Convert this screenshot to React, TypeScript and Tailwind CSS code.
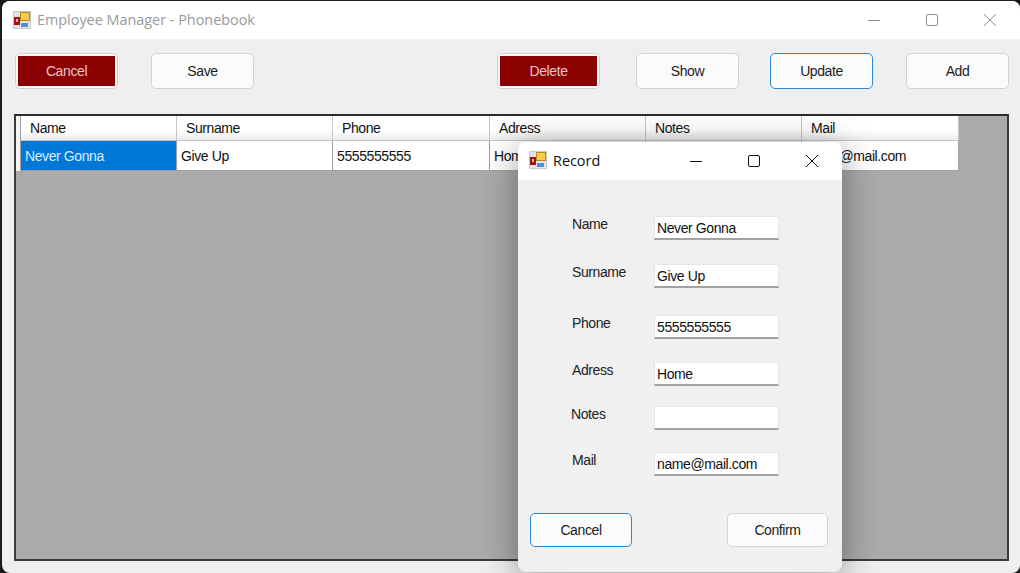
import React from "react";

const sans = "font-['Liberation_Sans',Arial,sans-serif]";
const ui = "font-['Open_Sans','Noto_Sans',sans-serif]";
const txt = "text-[14px] tracking-[-0.4px]";

function AppIcon() {
  return (
    <svg width="18" height="18" viewBox="0 0 18 18" className="shrink-0">
      <rect x="0" y="0" width="18" height="18" fill="#c9c9c9" />
      <rect x="1" y="1" width="16" height="16" fill="#e4e4e4" />
      <rect x="7" y="1" width="10" height="9" fill="#b48a1e" />
      <rect x="8" y="2" width="8" height="7" fill="#f6cc4a" />
      <rect x="1" y="6" width="6" height="8" fill="#a31515" />
      <rect x="3" y="8" width="2" height="3" fill="#f1b5b5" />
      <rect x="8" y="12" width="7" height="4" fill="#4f8ddb" />
    </svg>
  );
}

function Caption({ tone, gap }: { tone: string; gap: string }) {
  return (
    <div className="flex items-center">
      <svg width="14" height="14" viewBox="0 0 14 14">
        <path d="M1 7.5H13" stroke={tone} strokeWidth="1" />
      </svg>
      <svg width="14" height="14" viewBox="0 0 14 14" className={gap}>
        <rect x="1.5" y="1.5" width="11" height="11" rx="1.5" fill="none" stroke={tone} strokeWidth="1" />
      </svg>
      <svg width="14" height="14" viewBox="0 0 14 14" className={gap}>
        <path d="M1 1L13 13M13 1L1 13" stroke={tone} strokeWidth="1" />
      </svg>
    </div>
  );
}

function Btn({ label, kind = "plain", className = "" }: { label: string; kind?: "plain" | "red" | "focus"; className?: string }) {
  const base = `h-[36px] rounded-[5px] border ${txt} flex items-center justify-center ${sans} ${className}`;
  if (kind === "red") {
    return (
      <div className={`${base} w-[103px] border-[#d0d0d0] bg-[#fbfbfb] p-[2px] text-[#e8c8c8]`}>
        <div className="flex h-full w-full items-center justify-center bg-[#8b0000]">{label}</div>
      </div>
    );
  }
  const tone = kind === "focus" ? "border-[#2b87d8] border-[1.5px]" : "border-[#d2d2d2]";
  return <div className={`${base} w-[103px] ${tone} bg-[#fbfbfb] text-[#1c1c1c]`}>{label}</div>;
}

const columns = ["Name", "Surname", "Phone", "Adress", "Notes", "Mail"];
const cells = ["Never Gonna", "Give Up", "5555555555", "Home", "", "name@mail.com"];
const widths = ["w-[156px]", "w-[156px]", "w-[157px]", "w-[156px]", "w-[156px]", "w-[157px]"];

function Field({ label, value, mt, labelClass = "" }: { label: string; value: string; mt: string; labelClass?: string }) {
  return (
    <div className={`flex items-start ${mt}`}>
      <span className={`w-[82px] ${txt} leading-[16px] text-[#222] ${labelClass}`}>{label}</span>
      <input
        readOnly
        value={value}
        className={`h-[24px] w-[125px] border border-[#e6e6e6] border-b-2 border-b-[#a3a3a3] bg-white px-[2px] ${txt} text-[#111] outline-none ${sans}`}
      />
    </div>
  );
}

export default function App() {
  return (
    <div className={`relative h-[573px] w-[1020px] overflow-hidden bg-[#1c1c1c] pl-[2px] pt-[1px] ${sans}`}>
      <div className="flex h-[572px] w-[1018px] flex-col overflow-hidden rounded-[8px] bg-[#efefef]">
        <div className="flex h-[38px] shrink-0 items-center justify-between bg-white pl-[11px] pr-[23px]">
          <div className="flex items-center gap-[6px]">
            <AppIcon />
            <span className={`text-[14.4px] text-[#9a9a9a] ${ui}`}>Employee Manager - Phonebook</span>
          </div>
          <Caption tone="#8f8f8f" gap="ml-[44px]" />
        </div>

        <div className="flex h-[75px] shrink-0 items-start pl-[13px] pt-[14px]">
          <Btn label="Cancel" kind="red" />
          <Btn label="Save" className="ml-[33px]" />
          <Btn label="Delete" kind="red" className="ml-[243px]" />
          <Btn label="Show" className="ml-[36px]" />
          <Btn label="Update" kind="focus" className="ml-[31px]" />
          <Btn label="Add" className="ml-[33px]" />
        </div>

        <div className="ml-[12px] h-[447px] w-[995px] border-2 border-[#3b3b3b] border-t-[#2c2c2c] bg-[#ababab]">
          <div className="flex h-[25px]">
            <div className="w-[4px] bg-[#f4f4f4]" />
            <div className="w-[1px] bg-[#a0a0a0]" />
            {columns.map((c, i) => (
              <div
                key={c}
                className={`${widths[i]} flex items-center border-r border-b border-[#c6c6c6] bg-gradient-to-b from-white from-60% to-[#ececec] pl-[9px] pt-[1px] ${txt} text-[#111]`}
              >
                {c}
              </div>
            ))}
          </div>
          <div className="flex h-[30px]">
            <div className="w-[4px] bg-[#f4f4f4]" />
            <div className="w-[1px] bg-[#a0a0a0]" />
            {cells.map((c, i) => (
              <div
                key={i}
                className={`${widths[i]} flex items-center border-r border-b border-[#a0a0a0] pl-[4px] pt-[1px] ${txt} ${
                  i === 0 ? "bg-[#0078d7] text-[#dcecff]" : "bg-white text-[#111]"
                }`}
              >
                {c}
              </div>
            ))}
          </div>
        </div>
      </div>

      <div className="absolute left-[518px] top-[142px] flex h-[430px] w-[324px] flex-col overflow-hidden rounded-[8px] bg-[#f0f0f0] shadow-[0_6px_36px_rgba(0,0,0,0.4)]">
        <div className="flex h-[38px] shrink-0 items-center justify-between bg-white pl-[11px] pr-[23px]">
          <div className="-mt-[1px] flex items-center gap-[6px]">
            <AppIcon />
            <span className={`text-[14.4px] text-[#111] ${ui}`}>Record</span>
          </div>
          <Caption tone="#111111" gap="ml-[44px]" />
        </div>
        <div className="flex flex-col pl-[54px] pt-[36px]">
          <Field label="Name" value="Never Gonna" mt="" />
          <Field label="Surname" value="Give Up" mt="mt-[24px]" />
          <Field label="Phone" value="5555555555" mt="mt-[27px]" />
          <Field label="Adress" value="Home" mt="mt-[23px]" />
          <Field label="Notes" value="" mt="mt-[20px]" labelClass="-ml-[1px] w-[83px]" />
          <Field label="Mail" value="name@mail.com" mt="mt-[22px]" />
        </div>
        <div className="mt-[37px] flex items-start justify-between pl-[12px] pr-[14px]">
          <Btn label="Cancel" kind="focus" className="!h-[34px] !w-[102px]" />
          <Btn label="Confirm" className="!h-[34px] !w-[101px]" />
        </div>
      </div>
    </div>
  );
}
